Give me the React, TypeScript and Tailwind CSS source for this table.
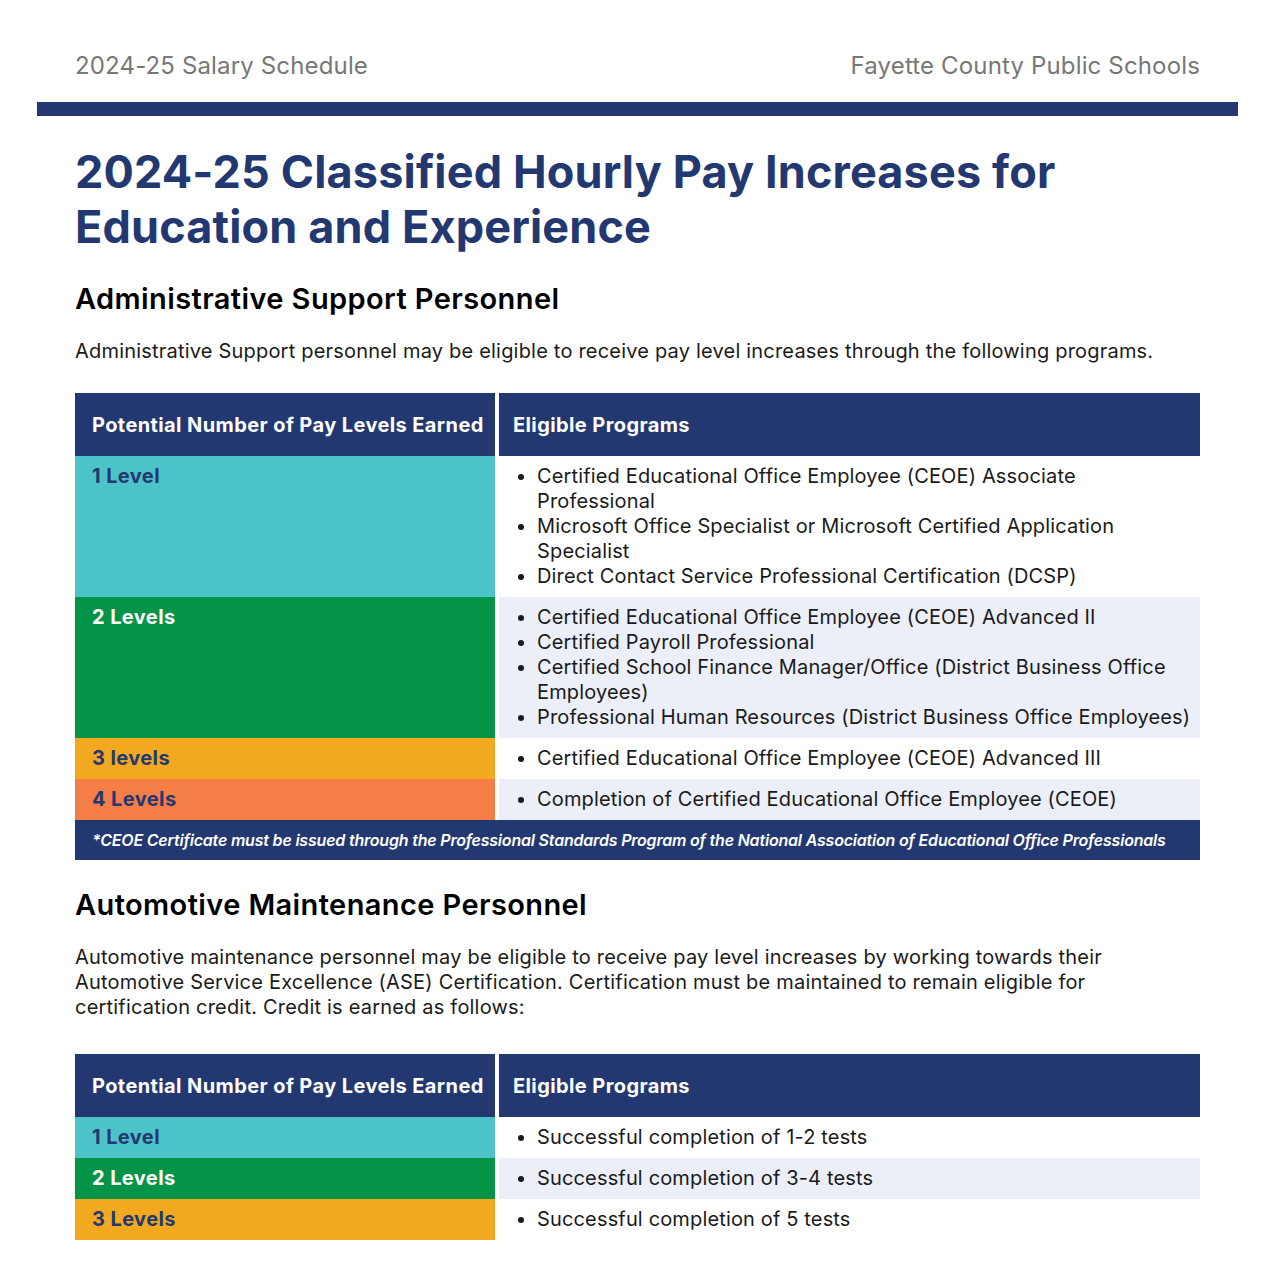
import React from "react";

type Row = { label: string; color: string; labelColor: string; items: string[] };

const adminRows: Row[] = [
  {
    label: "1 Level",
    color: "bg-[#4cc2c9]",
    labelColor: "text-[#233870]",
    items: [
      "Certified Educational Office Employee (CEOE) Associate Professional",
      "Microsoft Office Specialist or Microsoft Certified Application Specialist",
      "Direct Contact Service Professional Certification (DCSP)",
    ],
  },
  {
    label: "2 Levels",
    color: "bg-[#049447]",
    labelColor: "text-white",
    items: [
      "Certified Educational Office Employee (CEOE) Advanced II",
      "Certified Payroll Professional",
      "Certified School Finance Manager/Office (District Business Office Employees)",
      "Professional Human Resources (District Business Office Employees)",
    ],
  },
  {
    label: "3 levels",
    color: "bg-[#f2a920]",
    labelColor: "text-[#233870]",
    items: ["Certified Educational Office Employee (CEOE) Advanced III"],
  },
  {
    label: "4 Levels",
    color: "bg-[#f47e45]",
    labelColor: "text-[#233870]",
    items: ["Completion of Certified Educational Office Employee (CEOE)"],
  },
];

const autoRows: Row[] = [
  { label: "1 Level", color: "bg-[#4cc2c9]", labelColor: "text-[#233870]", items: ["Successful completion of 1-2 tests"] },
  { label: "2 Levels", color: "bg-[#049447]", labelColor: "text-white", items: ["Successful completion of 3-4 tests"] },
  { label: "3 Levels", color: "bg-[#f2a920]", labelColor: "text-[#233870]", items: ["Successful completion of 5 tests"] },
];

function PayTable({ rows, note }: { rows: Row[]; note?: string }) {
  return (
    <div className="grid grid-cols-[420px_1fr] gap-x-1">
      <div className="bg-[#233870] h-[63px] flex items-center pl-[17px] text-white font-bold text-[20px] tracking-[0.4px]">
        Potential Number of Pay Levels Earned
      </div>
      <div className="bg-[#233870] h-[63px] flex items-center pl-[14px] text-white font-bold text-[20px] tracking-[0.4px]">
        Eligible Programs
      </div>
      {rows.map((r, i) => (
        <React.Fragment key={r.label}>
          <div className={`${r.color} ${r.labelColor} pl-[17px] py-2 font-bold text-[20px] leading-[25px] tracking-[0.4px]`}>
            {r.label}
          </div>
          <div className={`${i % 2 === 1 ? "bg-[#eceff8]" : "bg-white"} py-2 pr-2`}>
            <ul className="list-disc pl-[38px] text-[20px] leading-[25px] text-[#1a1a1a] tracking-[0.15px]">
              {r.items.map((it) => (
                <li key={it}>{it}</li>
              ))}
            </ul>
          </div>
        </React.Fragment>
      ))}
      {note && (
        <div className="col-span-2 bg-[#233870] h-[40px] flex items-center pl-[17px] text-white italic font-semibold text-[16px] tracking-[-0.2px]">
          {note}
        </div>
      )}
    </div>
  );
}

export default function App() {
  return (
    <div className="bg-white min-h-[1275px] w-[1275px] font-['Inter',sans-serif]">
      {/* page header */}
      <div className="flex justify-between px-[75px] pt-[48px] h-[102px] text-[24px] text-[#777777] tracking-[0.15px]">
        <span>2024-25 Salary Schedule</span>
        <span>Fayette County Public Schools</span>
      </div>
      <div className="mx-[37px] h-[14px] bg-[#233870]" />

      <div className="px-[75px]">
        <h1 className="mt-[28px] text-[45px] leading-[55px] font-bold text-[#233870] tracking-[0.15px]">
          2024-25 Classified Hourly Pay Increases for
          <br />
          Education and Experience
        </h1>

        <h2 className="mt-[27px] text-[29px] leading-[36px] font-semibold text-black tracking-[0.4px]">
          Administrative Support Personnel
        </h2>
        <p className="mt-[22px] text-[20px] leading-[25px] text-[#1a1a1a] tracking-[0.2px]">
          Administrative Support personnel may be eligible to receive pay level increases through the following programs.
        </p>

        <div className="mt-[29px]">
          <PayTable
            rows={adminRows}
            note="*CEOE Certificate must be issued through the Professional Standards Program of the National Association of Educational Office Professionals"
          />
        </div>

        <h2 className="mt-[27px] text-[29px] leading-[36px] font-semibold text-black tracking-[0.4px]">
          Automotive Maintenance Personnel
        </h2>
        <p className="mt-[22px] text-[20px] leading-[25px] text-[#1a1a1a] tracking-[0.2px]">
          Automotive maintenance personnel may be eligible to receive pay level increases by working towards their
          Automotive Service Excellence (ASE) Certification. Certification must be maintained to remain eligible for
          certification credit. Credit is earned as follows:
        </p>

        <div className="mt-[34px]">
          <PayTable rows={autoRows} />
        </div>
      </div>
    </div>
  );
}
